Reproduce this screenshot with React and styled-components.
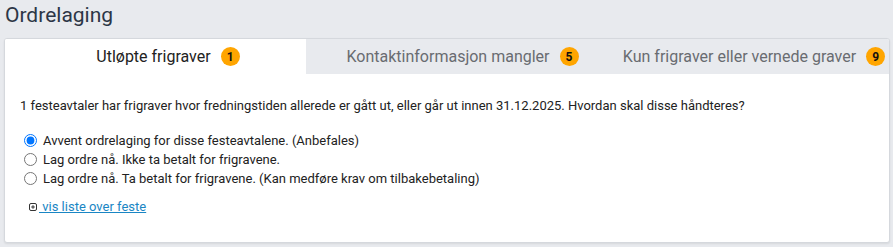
import React from 'react';
import styled, { createGlobalStyle } from 'styled-components';

const GlobalStyle = createGlobalStyle`
  html, body {
    margin: 0;
    padding: 0;
    background: #e8eaee;
    font-family: Roboto, "Liberation Sans", Arial, sans-serif;
  }
`;

const Page = styled.div`
  width: 893px;
  height: 247px;
  overflow: hidden;
`;

const Title = styled.h1`
  margin: 0 0 8px;
  padding: 0 5px;
  font-size: 21px;
  font-weight: 400;
  line-height: 30px;
  color: #2c3646;
`;

const Card = styled.div`
  margin: 0 3px 0 4px;
  background: #fff;
  border: 1px solid #d5d8dd;
  border-radius: 3px;
  box-shadow: 0 1px 2px rgba(0, 0, 0, 0.08);
  overflow: hidden;
`;

const TabBar = styled.div`
  display: flex;
  height: 35px;
`;

const Tab = styled.div`
  flex: 0 0 ${(p) => p.width}px;
  display: flex;
  align-items: center;
  justify-content: center;
  gap: 10px;
  padding-left: 25px;
  box-sizing: border-box;
  font-size: 16px;
  color: ${(p) => (p.active ? '#222' : '#696c71')};
  background: ${(p) => (p.active ? '#fff' : '#e8eaee')};
  cursor: pointer;
`;

const Badge = styled.span`
  display: inline-flex;
  align-items: center;
  justify-content: center;
  width: 19px;
  height: 19px;
  border-radius: 50%;
  background: #ffa500;
  color: #111;
  font-size: 12px;
  font-weight: 700;
`;

const Body = styled.div`
  padding: 22px 15px 25px;
  font-size: 13px;
  color: #222;
`;

const Question = styled.p`
  margin: 0;
  line-height: 20px;
`;

const Options = styled.div`
  margin-top: 15px;
  padding-left: 4px;
  display: flex;
  flex-direction: column;
`;

const Option = styled.label`
  display: flex;
  align-items: center;
  height: 19px;
  line-height: 19px;
`;

const Radio = styled.input`
  width: 13px;
  height: 13px;
  margin: 0 6px 0 0;
`;

const ToggleRow = styled.div`
  margin-top: 9px;
  padding-left: 9px;
  display: flex;
  align-items: center;
  line-height: 20px;
`;

const ListLink = styled.a`
  color: #1a86c4;
  text-decoration: underline;
  cursor: pointer;
  white-space: pre;
`;

const PlusBox = () => (
  <svg width="8" height="8" viewBox="0 0 8 8" style={{ marginRight: 2 }}>
    <rect x="0.5" y="0.5" width="7" height="7" rx="1.5" fill="none" stroke="#333" strokeWidth="1" />
    <path d="M2.2 4h3.6M4 2.2v3.6" stroke="#333" strokeWidth="1" />
  </svg>
);

const tabs = [
  { label: 'Utløpte frigraver', count: 1, width: 301 },
  { label: 'Kontaktinformasjon mangler', count: 5, width: 288 },
  { label: 'Kun frigraver eller vernede graver', count: 9, width: 295 },
];

const options = [
  'Avvent ordrelaging for disse festeavtalene. (Anbefales)',
  'Lag ordre nå. Ikke ta betalt for frigravene.',
  'Lag ordre nå. Ta betalt for frigravene. (Kan medføre krav om tilbakebetaling)',
];

export default function App() {
  const [active, setActive] = React.useState(0);
  const [choice, setChoice] = React.useState(0);

  return (
    <Page>
      <GlobalStyle />
      <Title>Ordrelaging</Title>
      <Card>
        <TabBar>
          {tabs.map((t, i) => (
            <Tab key={t.label} width={t.width} active={i === active} onClick={() => setActive(i)}>
              <span>{t.label}</span>
              <Badge>{t.count}</Badge>
            </Tab>
          ))}
        </TabBar>
        <Body>
          <Question>
            1 festeavtaler har frigraver hvor fredningstiden allerede er gått ut, eller går ut innen
            31.12.2025. Hvordan skal disse håndteres?
          </Question>
          <Options>
            {options.map((o, i) => (
              <Option key={o}>
                <Radio
                  type="radio"
                  name="handling"
                  checked={choice === i}
                  onChange={() => setChoice(i)}
                />
                {o}
              </Option>
            ))}
          </Options>
          <ToggleRow>
            <PlusBox />
            <ListLink> vis liste over feste</ListLink>
          </ToggleRow>
        </Body>
      </Card>
    </Page>
  );
}
